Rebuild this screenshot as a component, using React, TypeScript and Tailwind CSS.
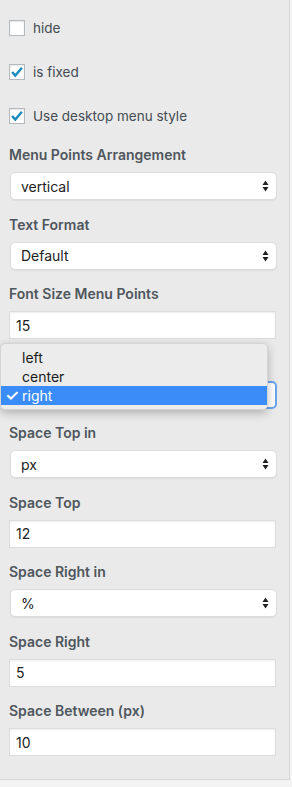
import { ReactNode } from "react";

const font = { fontFamily: "Inter, 'Noto Sans', sans-serif" };

const Check = ({ checked, label }: { checked: boolean; label: string }) => (
  <label className="flex items-center gap-2 h-4">
    <span className="w-4 h-4 bg-white border border-[#b4b9be] flex items-center justify-center shadow-[inset_0_1px_2px_rgba(0,0,0,0.1)]">
      {checked && (
        <svg width="14" height="14" viewBox="0 0 20 20">
          <path d="M3 10l4.5 5L17 4" fill="none" stroke="#1e8cbe" strokeWidth="3.6" />
        </svg>
      )}
    </span>
    <span className="text-[13.5px] text-[#444b52]">{label}</span>
  </label>
);

const Arrows = () => (
  <svg width="7" height="12" viewBox="0 0 7 12" className="absolute right-[7px] top-1/2 -translate-y-1/2">
    <path d="M3.5 0.5L6.5 5H0.5z" fill="#222" />
    <path d="M3.5 11.5L6.5 7H0.5z" fill="#222" />
  </svg>
);

const Field = ({ label, hidden, children }: { label: string; hidden?: boolean; children: ReactNode }) => (
  <div className="flex flex-col">
    <div className={hidden ? "invisible h-[18px] leading-[18px] text-[14px] font-semibold text-[#4f565c] mb-2" : "h-[18px] leading-[18px] text-[14px] font-semibold text-[#4f565c] mb-2"}>
      {label}
    </div>
    {children}
  </div>
);

const Select = ({ value, focus }: { value: string; focus?: boolean }) => (
  <div
    className={
      focus
        ? "relative ml-px w-[267px] h-[28px] bg-white rounded-[5px] border-2 border-[#6aa5ea] flex items-center pl-[10px] text-[14px] text-[#222]"
        : "relative ml-px w-[267px] h-[28px] bg-white rounded-[5px] border border-[#dcdcdc] shadow-[0_1px_1px_rgba(0,0,0,0.06)] flex items-center pl-[10px] text-[14px] text-[#222]"
    }
  >
    {value}
    <Arrows />
  </div>
);

const Input = ({ value }: { value: string }) => (
  <div className="w-[267px] h-[28px] bg-white border border-[#dddddd] shadow-[inset_0_1px_2px_rgba(0,0,0,0.07)] flex items-center pl-[6px] text-[14px] text-[#222]">
    {value}
  </div>
);

export default function App() {
  return (
    <div className="w-[292px] h-[787px] bg-[#f3f3f3] relative" style={font}>
      <div className="w-[290px] border-r border-b border-[#d8d8d8] bg-[#eaeaea] pl-[9px] pt-5 pb-[23px]">
        <div className="flex flex-col gap-7">
          <Check checked={false} label="hide" />
          <Check checked label="is fixed" />
          <Check checked label="Use desktop menu style" />
        </div>
        <div className="flex flex-col gap-[15.5px] mt-[22px]">
          <Field label="Menu Points Arrangement">
            <Select value="vertical" />
          </Field>
          <Field label="Text Format">
            <Select value="Default" />
          </Field>
          <Field label="Font Size Menu Points">
            <Input value="15" />
          </Field>
          <Field label="Text Alignment" hidden>
            <Select value="" focus />
          </Field>
          <Field label="Space Top in">
            <Select value="px" />
          </Field>
          <Field label="Space Top">
            <Input value="12" />
          </Field>
          <Field label="Space Right in">
            <Select value="%" />
          </Field>
          <Field label="Space Right">
            <Input value="5" />
          </Field>
          <Field label="Space Between (px)">
            <Input value="10" />
          </Field>
        </div>
      </div>

      <div className="absolute left-0 top-[343px] w-[268px] py-1 bg-[#ececec] rounded-[5px] border border-[#d4d4d4] shadow-[0_3px_10px_rgba(0,0,0,0.25)] text-[14px] text-[#1a1a1a]">
        <div className="h-[19px] leading-[19px] pl-[21px]">left</div>
        <div className="h-[19px] leading-[19px] pl-[21px]">center</div>
        <div className="h-[19px] leading-[19px] pl-[21px] bg-[#3a8cf9] text-white relative">
          <span className="absolute left-[4px] top-0 text-[16px] font-semibold">✓</span>
          right
        </div>
      </div>
    </div>
  );
}
